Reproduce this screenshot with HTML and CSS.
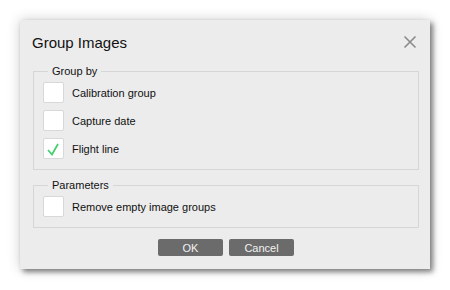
FILE: index.html
```html
<!DOCTYPE html>
<html lang="en">
<head>
  <meta charset="UTF-8" />
  <title>Group Images</title>
  <link rel="stylesheet" href="styles.css">
</head>
<body>

  <div class="dialog">
    <div class="dialog-header">
      <h1>Group Images</h1>
      <span class="close-btn">
        <svg width="14" height="14" viewBox="0 0 14 14">
          <path d="M1.5 1.5 L12.5 12.5 M12.5 1.5 L1.5 12.5" stroke="#8a8a8a" stroke-width="1.6" fill="none" />
        </svg>
      </span>
    </div>

    <fieldset class="group">
      <legend>Group by</legend>
      <label class="option">
        <span class="box"></span>
        <span>Calibration group</span>
      </label>
      <label class="option">
        <span class="box"></span>
        <span>Capture date</span>
      </label>
      <label class="option">
        <span class="box">
          <svg width="21" height="21" viewBox="0 0 21 21">
            <path d="M5 12 L9 16.5 L15 6" stroke="#3fd06c" stroke-width="1.7" fill="none" />
          </svg>
        </span>
        <span>Flight line</span>
      </label>
    </fieldset>

    <fieldset class="group">
      <legend>Parameters</legend>
      <label class="option">
        <span class="box"></span>
        <span>Remove empty image groups</span>
      </label>
    </fieldset>

    <div class="actions">
      <button>OK</button>
      <button>Cancel</button>
    </div>
  </div>

</body>
</html>
```

FILE: styles.css
```css
body {
  font-family: "Liberation Sans", Arial, sans-serif;
  margin: 0;
  padding: 20px;
  background-color: #fff;
  color: #111;
}

.dialog {
  width: 410px;
  height: 249px;
  box-sizing: border-box;
  background-color: #ececec;
  padding: 0 11px 12px 13px;
  box-shadow: 3px 3px 5px rgba(0,0,0,0.45), 0 0 12px rgba(0,0,0,0.2);
}

.dialog-header {
  height: 45px;
  display: flex;
  justify-content: space-between;
  align-items: flex-start;
}

.dialog-header h1 {
  margin: 14px 0 0 -1px;
  font-size: 15px;
  font-weight: normal;
  line-height: 18px;
}

.close-btn {
  margin-top: 15px;
  margin-right: 2px;
  display: flex;
}

.group {
  margin: 0 0 9px;
  padding: 4px 9px 10px;
  border: 1px solid #d6d6d6;
  display: flex;
  flex-direction: column;
  gap: 7px;
}

.group legend {
  font-size: 11px;
  line-height: 13px;
  padding: 0 4px;
  margin-left: 5px;
}

.option {
  display: flex;
  align-items: center;
  gap: 8px;
  font-size: 11px;
  height: 21px;
}

.box {
  width: 21px;
  height: 21px;
  box-sizing: border-box;
  background-color: #fff;
  border: 1px solid #d8d8d8;
  border-radius: 2px;
  display: flex;
  align-items: center;
  justify-content: center;
}

.box svg {
  flex: none;
}

.actions {
  display: flex;
  justify-content: center;
  gap: 6px;
  margin-top: 11px;
}

.actions button {
  width: 65px;
  height: 17px;
  padding: 0;
  font-family: "Liberation Sans", Arial, sans-serif;
  font-size: 11px;
  color: #f2f2f2;
  background-color: #6b6b6b;
  border: none;
  border-radius: 2px;
}
```
